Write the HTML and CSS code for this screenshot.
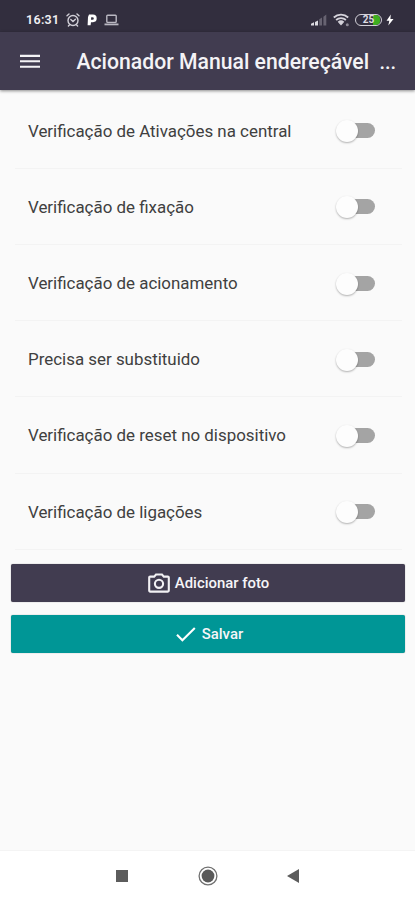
FILE: index.html
```html
<!DOCTYPE html>
<html lang="pt-BR">
<head>
<meta charset="utf-8">
<title>Acionador Manual endereçável</title>
<link rel="stylesheet" href="styles.css">
</head>
<body>
<div class="screen">
  <div class="status">
    <span class="clock">16:31</span>
    <svg class="alarm" width="14" height="14" viewBox="0 0 14 14" fill="none" stroke="#d2d0d8" stroke-width="1.4" stroke-linecap="round"><circle cx="7" cy="7.5" r="5"/><path d="M1 2.8 3 1M13 2.8 11 1M4.8 6.5 7 8.5 9.4 6.3M3.4 12 2.4 13M10.6 12l1 1"/></svg>
    <svg class="parking" width="10" height="12" viewBox="0 0 10 12"><path fill="#fff" fill-rule="evenodd" d="M2 .6h3.8a3.8 3.8 0 0 1 .2 7.6H4l-.4 3H.6L1 3zM4.2 3.2 4 5.8h1.5a1.3 1.3 0 0 0 0-2.6z"/></svg>
    <svg class="laptop" width="15" height="12" viewBox="0 0 15 12" fill="none" stroke="#bab8c2" stroke-width="1.4"><rect x="2.8" y="1.2" width="9.4" height="7.2" rx=".8"/><path d="M.5 10.4h14" stroke-width="1.8"/></svg>
    <span class="spring"></span>
    <svg class="signal" width="16" height="12" viewBox="0 0 16 12"><path fill="#dcdbe1" d="M0 11.5V9.7l3-1.4v3.2zM4 11.5V8l3-1.6v5.1z"/><path fill="#676371" d="M8.2 11.5V5.3l2.8-1.7v7.9zM12.4 11.5V2.7L15.3.6v10.9z"/></svg>
    <svg class="wifi" width="17" height="14" viewBox="0 0 17 14"><g fill="none" stroke="#d5d3db" stroke-width="1.8"><path d="M.8 4.5a10.6 10.6 0 0 1 14.4 0M3.1 7a7.3 7.3 0 0 1 9.8 0M5.3 9.4a4.2 4.2 0 0 1 5.4 0"/></g><path fill="#d5d3db" d="m8 12.6-2.5-2.8a4 4 0 0 1 5 0z"/><circle cx="14.3" cy="11.7" r="1.5" fill="#8d8a96"/></svg>
    <span class="battery"><span class="charge"></span><span class="percent">25</span></span>
    <svg class="bolt" width="8" height="12" viewBox="0 0 8 12"><path fill="#fff" d="M4.8.5.5 6.8h2.8l-1 4.7 5.2-6.4H4.4z"/></svg>
  </div>
  <header class="appbar">
    <svg class="menu" width="20" height="15" viewBox="0 0 20 15" stroke="#f3f2f5" stroke-width="2.1"><path d="M0 1.9h20M0 7.3h20M0 12.7h20"/></svg>
    <h1 class="title">Acionador Manual endereçável</h1><span class="more">...</span>
  </header>
  <main class="content">
    <ul class="checks">
      <li class="check"><span class="label">Verificação de Ativações na central</span><span class="switch"></span></li>
      <li class="check"><span class="label">Verificação de fixação</span><span class="switch"></span></li>
      <li class="check"><span class="label">Verificação de acionamento</span><span class="switch"></span></li>
      <li class="check"><span class="label">Precisa ser substituido</span><span class="switch"></span></li>
      <li class="check"><span class="label">Verificação de reset no dispositivo</span><span class="switch"></span></li>
      <li class="check"><span class="label">Verificação de ligações</span><span class="switch"></span></li>
    </ul>
    <div class="actions">
      <button class="btn photo"><svg width="22" height="20" viewBox="0 0 22 20" fill="none" stroke="#f2f1f4" stroke-width="2.1"><path d="M2.2 3.6h4L8 1.5h6l1.8 2.1h4q1 0 1 1v13q0 1-1 1H2.2q-1 0-1-1v-13q0-1 1-1z"/><circle cx="11" cy="10.8" r="4.1"/></svg><span>Adicionar foto</span></button>
      <button class="btn save"><svg width="20" height="15" viewBox="0 0 20 15" fill="none" stroke="#fff" stroke-width="2.1"><path d="m1 7.8 5.4 5.4L18.8 1"/></svg><span>Salvar</span></button>
    </div>
  </main>
  <nav class="navbar">
    <svg width="12" height="12" viewBox="0 0 12 12"><path fill="#5c5c5c" d="M0 0h12v12H0z"/></svg>
    <svg width="20" height="20" viewBox="0 0 20 20"><circle cx="10" cy="10" r="8.9" fill="none" stroke="#707070" stroke-width="1.3"/><circle cx="10" cy="10" r="6.4" fill="#595959"/></svg>
    <svg width="12" height="14" viewBox="0 0 12 14"><path fill="#5c5c5c" d="M12 0v14L0 7z"/></svg>
  </nav>
</div>
</body>
</html>
```

FILE: styles.css
```css
* { box-sizing: border-box; }
body { margin: 0; font-family: Roboto, sans-serif; background: #fafafa; }
.screen { width: 415px; height: 900px; display: flex; flex-direction: column; overflow: hidden; }
.status { height: 32px; flex: none; background: #322e3e; display: flex; align-items: center; padding: 7px 21px 0 26px; color: #f0eff3; }
.clock { font-size: 12.5px; font-weight: 600; letter-spacing: .3px; width: 40px; white-space: nowrap; }
.parking { margin-left: 7px; }
.laptop { margin-left: 7px; }
.spring { flex: 1; }
.wifi { margin-left: 6px; }
.battery { position: relative; width: 27px; height: 12px; margin-left: 5px; border: 1.5px solid #d2d0d8; border-radius: 6px; overflow: hidden; display: flex; align-items: center; justify-content: center; }
.charge { position: absolute; right: 1px; top: 0; width: 7px; height: 10px; border-radius: 0 4px 4px 0; background: #3fae20; }
.percent { position: relative; font-size: 10px; font-weight: 700; line-height: 10px; color: #dddce2; }
.bolt { margin-left: 4px; }
.appbar { height: 58px; flex: none; background: #413c50; display: flex; align-items: center; padding: 1px 0 0 20px; color: #f4f3f6; position: relative; box-shadow: 0 1px 3px rgba(0,0,0,.45); }
.menu { margin-top: -1px; }
.title { margin: 0 0 0 36.5px; width: 303px; font-size: 21.2px; font-weight: 500; white-space: nowrap; }
.more { font-size: 20px; font-weight: 500; }
.content { flex: 1; }
.checks { list-style: none; margin: 0; padding: 2.6px 13px 0 15px; }
.check { height: 76.2px; display: flex; align-items: center; justify-content: space-between; border-bottom: 1px solid #f3f3f3; padding: 1px 27px 0 13px; }
.label { font-size: 16.92px; color: #404040; white-space: nowrap; }
.switch { position: relative; width: 38px; height: 15px; border-radius: 8px; background: linear-gradient(90deg, transparent 10px, #a4a4a4 10px); }
.switch::before { content: ""; position: absolute; left: -1px; top: -3px; width: 22px; height: 22px; border-radius: 50%; background: #fdfdfd; box-shadow: 0 1px 2px rgba(0,0,0,.3); }
.actions { padding: 14.7px 10px 0 11px; display: grid; gap: 12.8px; }
.btn { height: 38px; border: 0; border-radius: 2px; display: flex; align-items: center; justify-content: center; gap: 5px; padding: 0 0 0 1px; font: 500 14.9px Roboto, sans-serif; color: #f6f5f8; box-shadow: 0 0 1px rgba(0,0,0,.5); white-space: nowrap; }
.save { gap: 6px; padding-left: 3px; }
.photo { background: #413c50; }
.save { background: #009696; }
.navbar { height: 50px; flex: none; background: #fff; border-top: 1px solid #f4f4f4; display: flex; justify-content: center; align-items: center; gap: 69.5px; }
```
